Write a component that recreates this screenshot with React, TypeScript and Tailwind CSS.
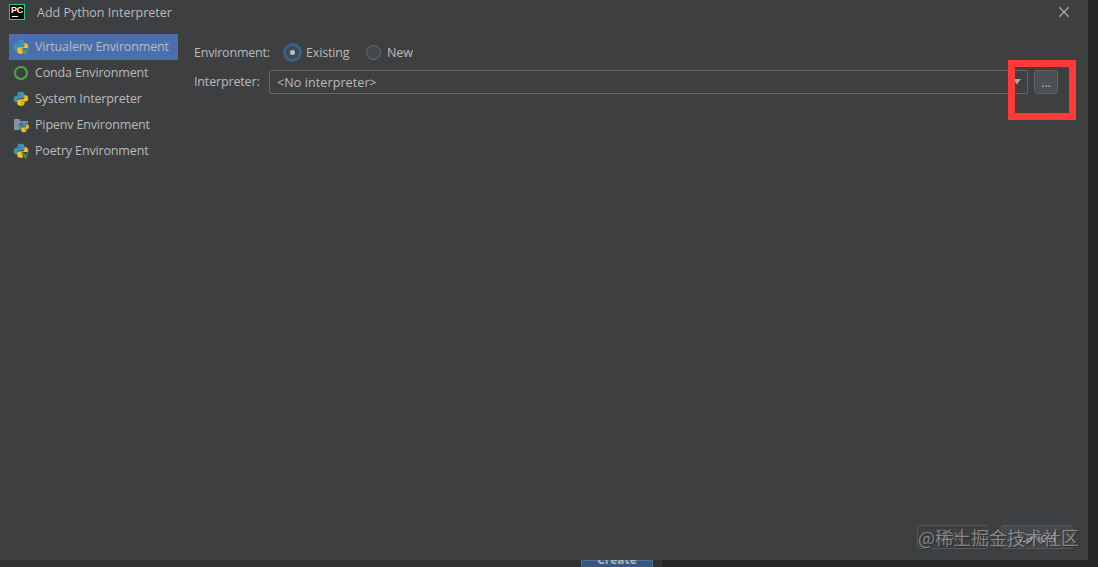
import clsx from "clsx";
import type { ReactNode } from "react";

const BODY = "M7.4 1C4.8 1 4.6 2.1 4.6 3v1.600h3.500v.7H3C1.600 5.300.9 6.300.9 8.100c0 1.900.8 2.900 2 2.900h1.300V9.200c0-1.200 1-2.100 2.200-2.100h3.100c1 0 1.800-.8 1.800-1.800V3c0-1.200-1.200-2-2.500-2z";

function Snakes() {
  return (
    <>
      <path d={BODY} fill="#4295b8" stroke="#4295b8" strokeWidth=".5" />
      <g transform="rotate(180 7.900 7.800)">
        <path d={BODY} fill="#f0c423" stroke="#f0c423" strokeWidth=".5" />
      </g>
      <circle cx="6.200" cy="2.900" r=".6" fill="#3c5f70" />
      <circle cx="9.500" cy="12.700" r=".6" fill="#8b7a30" />
    </>
  );
}

function PythonIcon() {
  return (
    <svg width="16" height="16" viewBox="0 0 16 16">
      <Snakes />
    </svg>
  );
}

function VenvIcon({ selected = false }: { selected?: boolean }) {
  return (
    <svg width="16" height="16" viewBox="0 0 16 16">
      <Snakes />
      <path d="M9 9h7v7h-5z" fill={selected ? "#4b6eaf" : "#3d3f41"} />
      <path d="M10.400 9.800l2.100 5 2.100-5" fill="none" stroke="#5fa544" strokeWidth="1.200" />
    </svg>
  );
}

function CondaIcon() {
  return (
    <svg width="16" height="16" viewBox="0 0 16 16">
      <circle cx="8" cy="8" r="6" fill="none" stroke="#51a846" strokeWidth="2.100" />
      <path d="M2.800 5.200l1.800 1M2.200 8h2M3 11l1.700-1M5.200 2.900l1 1.600" stroke="#3c5f3f" strokeWidth=".7" />
    </svg>
  );
}

function PipenvIcon() {
  return (
    <svg width="16" height="16" viewBox="0 0 16 16">
      <path d="M1 2h5l1.700 2H15v9H1z" fill="#87939a" />
      <circle cx="10.800" cy="10" r="5" fill="#3d3f41" />
      <g transform="translate(5.200 4.400) scale(.72)">
        <Snakes />
      </g>
    </svg>
  );
}

type Item = { label: string; icon: ReactNode };

const items: Item[] = [
  { label: "Virtualenv Environment", icon: <VenvIcon selected /> },
  { label: "Conda Environment", icon: <CondaIcon /> },
  { label: "System Interpreter", icon: <PythonIcon /> },
  { label: "Pipenv Environment", icon: <PipenvIcon /> },
  { label: "Poetry Environment", icon: <VenvIcon /> },
];

function TitleBar() {
  return (
    <header className="flex h-6 items-center pl-[9px] pr-[18px]">
      <div className="flex h-4 w-4 flex-col border border-[#24c99a] bg-black pl-px">
        <span className="h-[10px] font-['Liberation_Sans',sans-serif] text-[9px] font-bold leading-[11px] tracking-[-0.2px] text-white">PC</span>
        <span className="ml-px mt-px h-px w-[6px] bg-white" />
      </div>
      <h1 className="ml-3 pt-[2px] tracking-normal">Add Python Interpreter</h1>
      <svg className="ml-auto" width="12" height="12" viewBox="0 0 12 12" stroke="#b8babb" strokeWidth="1.100">
        <path d="M1.200 1.200l9.600 9.600M10.800 1.200l-9.600 9.600" />
      </svg>
    </header>
  );
}

function Sidebar() {
  return (
    <nav className="mt-[10px] w-[169px]">
      {items.map((item, i) => (
        <div key={item.label} className={clsx("flex h-[26px] items-center pl-1", i === 0 && "bg-[#4b6eaf]")}>
          <span className="-mt-px flex w-[22px] shrink-0">{item.icon}</span>
          <span className="whitespace-nowrap">{item.label}</span>
        </div>
      ))}
    </nav>
  );
}

function InterpreterForm() {
  return (
    <section className="ml-4 mt-4 flex-1">
      <div className="flex h-6 items-center">
        <span className="w-[89px] pt-[2px] tracking-[-0.2px]">Environment:</span>
        <span className="flex h-[19px] w-[19px] items-center justify-center rounded-full border-[3px] border-[#3d6185] bg-[#3f4951]">
          <span className="h-[5px] w-[5px] rounded-full bg-[#b9bec2]" />
        </span>
        <span className="ml-1 w-[60px] pt-[2px]">Existing</span>
        <span className="h-[15px] w-[15px] rounded-full border border-[#696d6e] bg-[#43494a]" />
        <span className="ml-[6px] pt-[2px]">New</span>
      </div>
      <div className="mt-[6px] flex h-6 items-center">
        <span className="w-[75px]">Interpreter:</span>
        <div className="flex h-6 w-[759px] items-center justify-between rounded-[2px] border border-[#646667] pl-[7px] pr-[6px]">
          <span className="pt-[2px] tracking-[0.1px]">&lt;No interpreter&gt;</span>
          <svg width="8" height="6" viewBox="0 0 8 6" fill="#a2a6a8">
            <path d="M0 0h8L4 5.500z" />
          </svg>
        </div>
        <button className="ml-[6px] flex h-6 w-6 items-center justify-center rounded-[3px] border border-[#5e6163] bg-[#4c5052] pt-[2px]">...</button>
      </div>
    </section>
  );
}

function Footer() {
  return (
    <footer className="mt-auto flex justify-end gap-3 pb-[11px] pr-[15px]">
      <button className="h-6 w-[72px] rounded-[3px] border border-[#55585a] text-[#777a7c]">OK</button>
      <button className="h-6 w-[72px] rounded-[3px] border border-[#55585a] bg-[#45494b] pt-px text-[#c4c6c7]">Cancel</button>
    </footer>
  );
}

export default function App() {
  return (
    <div className="relative h-[567px] w-[1098px] overflow-hidden bg-[#262626] font-['Open_Sans','Noto_Sans_CJK_SC',sans-serif] text-[12.5px] leading-[18px] tracking-[-0.15px] text-[#b9bbbc]">
      <main className="flex h-[560px] w-[1088px] flex-col bg-[#3d3f41]">
        <TitleBar />
        <div className="flex pl-[9px]">
          <Sidebar />
          <InterpreterForm />
        </div>
        <Footer />
      </main>

      {/* Edge of the window behind the dialog */}
      <div className="flex h-[7px] w-[662px] justify-end overflow-hidden bg-[#303233] pr-[9px]">
        <div className="flex h-6 w-[72px] items-start justify-center border border-[#4c708c] bg-[#365880]">
          <span className="-mt-[10px] text-[12px] font-bold leading-[18px] tracking-normal text-[#a9b3bd]">Create</span>
        </div>
      </div>

      {/* Highlighted browse button */}
      <div className="absolute left-[1008px] top-[60px] h-[60px] w-[68px] border-[7px] border-[#ff3838]" />

      <div className="absolute left-[918px] top-[524px] whitespace-nowrap font-['Noto_Sans_CJK_SC',sans-serif] text-[18px] leading-[26px] tracking-normal text-[#a0a2a3]/75 [text-shadow:1px_1px_1px_#292b2c]">
        @稀土掘金技术社区
      </div>
    </div>
  );
}
